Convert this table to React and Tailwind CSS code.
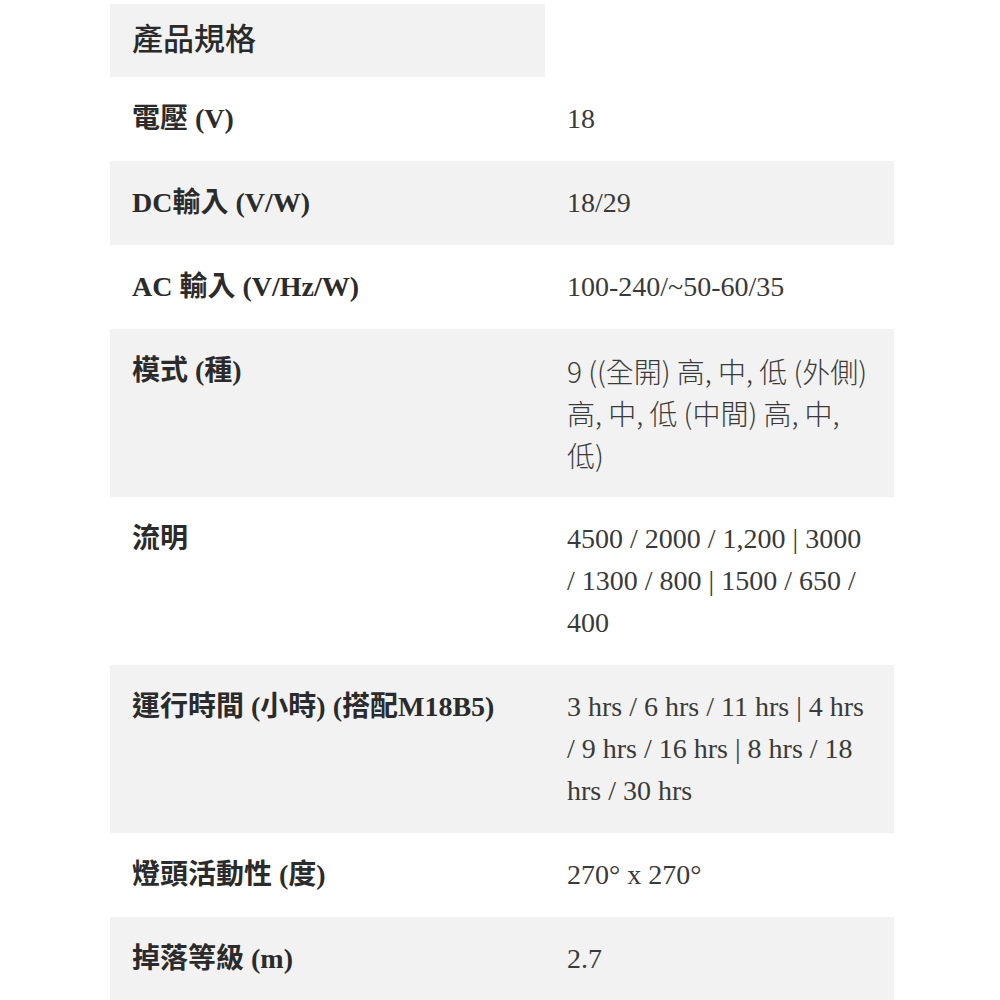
import React from "react";

const rows = [
  { label: "電壓 (V)", value: "18", gray: false },
  { label: "DC輸入 (V/W)", value: "18/29", gray: true },
  { label: "AC 輸入 (V/Hz/W)", value: "100-240/~50-60/35", gray: false },
  {
    label: "模式 (種)",
    value: (
      <>
        9 ((全開) 高, 中, 低 (外側)
        <br />
        高, 中, 低 (中間) 高, 中,
        <br />
        低)
      </>
    ),
    gray: true,
    sans: true,
  },
  { label: "流明", value: "4500 / 2000 / 1,200 | 3000 / 1300 / 800 | 1500 / 650 / 400", gray: false },
  { label: "運行時間 (小時) (搭配M18B5)", value: "3 hrs / 6 hrs / 11 hrs | 4 hrs / 9 hrs / 16 hrs | 8 hrs / 18 hrs / 30 hrs", gray: true },
  { label: "燈頭活動性 (度)", value: "270° x 270°", gray: false },
  { label: "掉落等級 (m)", value: "2.7", gray: true },
];

export default function App() {
  return (
    <div className="min-h-screen bg-white pt-1">
      <div className="ml-[110px] w-[784px]">
        <div className="w-[435px] h-[73px] bg-[#f2f2f2] px-[22px] pb-[6px] flex items-center text-[31px] font-medium text-[#2a2a2a] font-['Noto_Sans_CJK_TC',sans-serif]">
          產品規格
        </div>
        {rows.map((r) => (
          <div
            key={r.label}
            className={`grid grid-cols-[435px_349px] ${r.gray ? "bg-[#f2f2f2]" : "bg-white"}`}
          >
            <div className="px-[22px] py-[21px] leading-[42px] text-[28px] font-bold text-[#2b2b2b] font-['Liberation_Serif','Noto_Sans_CJK_TC',serif]">
              {r.label}
            </div>
            {r.sans ? (
              <div className="px-[22px] py-[21px] leading-[42px] text-[28px] font-light whitespace-nowrap text-[#3a3a3a] font-['Noto_Sans_CJK_TC',sans-serif]">
                {r.value}
              </div>
            ) : (
              <div className="px-[22px] py-[21px] leading-[42px] text-[28px] text-[#3a3a3a] font-['Liberation_Serif','Noto_Sans_CJK_TC',serif]">
                {r.value}
              </div>
            )}
          </div>
        ))}
      </div>
    </div>
  );
}
